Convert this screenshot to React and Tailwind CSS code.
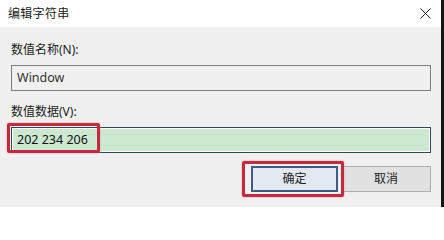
import React from 'react'

const cjk = { fontFamily: '"Segoe UI", "Noto Sans", "Noto Sans CJK SC", sans-serif' }

function Field({ value, active }) {
    if (active) {
        return (
            <div className="h-[26px] border border-[#34465c] bg-white p-px">
                <div className="h-full bg-[#cce8cf] flex items-center pl-[4px] text-[12.5px] text-[#111]">{value}</div>
            </div>
        )
    }
    return (
        <div className="h-[26px] border border-[#7d7d7d] bg-[#f0f0f0] flex items-center pl-[5px] text-[12.5px] text-[#333]">
            {value}
        </div>
    )
}

export default function App() {
    return (
        <div className="w-[444px] h-[207px] flex bg-[#f0f0f0] overflow-hidden" style={cjk}>
            <div className="relative w-[441px] h-full flex flex-col">
                {/* title bar */}
                <div className="h-[27px] bg-white flex items-center justify-between pl-[8px] pr-[10px]">
                    <div className="text-[12px] text-[#222] tracking-[0.3px]">编辑字符串</div>
                    <svg width="11" height="11" viewBox="0 0 11 11" className="text-[#222]">
                        <path d="M0.5 0.5 L10.5 10.5 M10.5 0.5 L0.5 10.5" stroke="currentColor" strokeWidth="1" />
                    </svg>
                </div>

                {/* body */}
                <div className="flex-1 pl-[11px] pr-[10px] pt-[15px]">
                    <div className="h-[16px] leading-[16px] text-[12px] text-[#222]">数值名称(N):</div>
                    <div className="mt-[7px]">
                        <Field value="Window" />
                    </div>
                    <div className="mt-[13px] h-[16px] leading-[16px] text-[12px] text-[#222]">数值数据(V):</div>
                    <div className="mt-[7px]">
                        <Field value="202 234 206" active />
                    </div>
                    <div className="mt-[13px] flex justify-end gap-[3px]">
                        <button className="w-[87px] h-[26px] border-2 border-[#3d5d84] bg-[#e3e9f0] text-[12px] text-[#222]">确定</button>
                        <button className="w-[90px] h-[26px] border border-[#adadad] bg-[#e1e1e1] text-[12px] text-[#222]">取消</button>
                    </div>
                </div>

                {/* red annotation boxes */}
                <div className="absolute left-[7px] top-[123px] w-[93px] h-[30px] border-[3px] border-[#c42a3d] rounded-[2px] shadow-[0_0_2px_#e58a96]" />
                <div className="absolute left-[242px] top-[161px] w-[102px] h-[36px] border-[3px] border-[#c42a3d] rounded-[2px] shadow-[0_0_2px_#e58a96]" />
            </div>
            <div className="w-[3px] h-full bg-[#151515]" />
        </div>
    )
}
